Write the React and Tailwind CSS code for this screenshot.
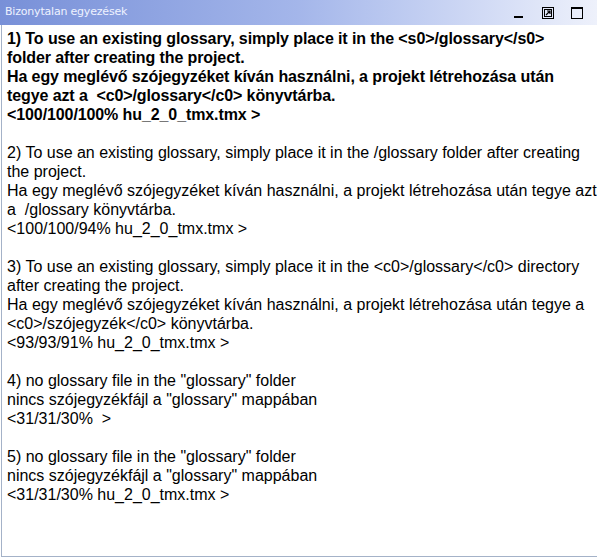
export default function App() {
    const blocks = [
        {
            bold: true,
            lines: [
                "1) To use an existing glossary, simply place it in the <s0>/glossary</s0>",
                "folder after creating the project.",
                "Ha egy meglévő szójegyzéket kíván használni, a projekt létrehozása után",
                "tegye azt a  <c0>/glossary</c0> könyvtárba.",
                "<100/100/100% hu_2_0_tmx.tmx >",
            ],
        },
        {
            lines: [
                "2) To use an existing glossary, simply place it in the /glossary folder after creating",
                "the project.",
                "Ha egy meglévő szójegyzéket kíván használni, a projekt létrehozása után tegye azt",
                "a  /glossary könyvtárba.",
                "<100/100/94% hu_2_0_tmx.tmx >",
            ],
        },
        {
            lines: [
                "3) To use an existing glossary, simply place it in the <c0>/glossary</c0> directory",
                "after creating the project.",
                "Ha egy meglévő szójegyzéket kíván használni, a projekt létrehozása után tegye a",
                "<c0>/szójegyzék</c0> könyvtárba.",
                "<93/93/91% hu_2_0_tmx.tmx >",
            ],
        },
        {
            lines: [
                "4) no glossary file in the \"glossary\" folder",
                "nincs szójegyzékfájl a \"glossary\" mappában",
                "<31/31/30%  >",
            ],
        },
        {
            lines: [
                "5) no glossary file in the \"glossary\" folder",
                "nincs szójegyzékfájl a \"glossary\" mappában",
                "<31/31/30% hu_2_0_tmx.tmx >",
            ],
        },
    ];

    return (
        <div className="w-[597px] h-[557px] flex flex-col bg-white overflow-hidden font-['Liberation_Sans',Arial,sans-serif]">

            {/* TITLE BAR */}
            <div className="h-[25px] shrink-0 flex items-center bg-gradient-to-r from-[#7890d8] via-[#a4b6ea] to-[#eef1fb] pr-[14px]">
                <span className="pl-[5px] text-[11px] text-[#eef2ff] font-['DejaVu_Sans',sans-serif] tracking-[-0.2px]">
                    Bizonytalan egyezések
                </span>
                <div className="ml-auto flex items-center">
                    {/* minimize */}
                    <div className="w-[10px] h-[12px] flex items-end justify-center pb-[1px]">
                        <div className="w-[9px] h-[2px] bg-black" />
                    </div>
                    {/* restore */}
                    <svg className="ml-[19px]" width="12" height="12" viewBox="0 0 12 12">
                        <rect x="0.5" y="0.5" width="11" height="11" fill="none" stroke="#000" />
                        <rect x="2.5" y="2.5" width="7" height="7" fill="none" stroke="#000" />
                        <path d="M4 8 L8 4 M5 4 H8 V7" stroke="#000" strokeWidth="1.2" fill="none" />
                    </svg>
                    {/* maximize */}
                    <svg className="ml-[17px]" width="12" height="12" viewBox="0 0 12 12">
                        <rect x="0.5" y="1" width="11" height="10.5" fill="none" stroke="#000" />
                        <rect x="0" y="0" width="12" height="2" fill="#000" />
                    </svg>
                </div>
            </div>

            {/* BODY */}
            <div className="flex-1 flex min-h-0">
                <div className="flex-1 ml-[1px] border border-[#a4b2c8] border-t-0 flex flex-col">
                    <div className="px-[5px] pt-[4px] text-[16px] leading-[19px] text-black">
                        {blocks.map((b, i) => (
                            <div key={i} className={b.bold ? "font-bold mb-[19px] tracking-[-0.1px]" : "mb-[19px]"}>
                                {b.lines.map((l, j) => (
                                    <div key={j} className="whitespace-pre">{l}</div>
                                ))}
                            </div>
                        ))}
                    </div>
                </div>
                <div className="w-[1px] bg-white" />
                <div className="w-[4px] bg-[#0a3ccf]" />
            </div>

        </div>
    );
}
